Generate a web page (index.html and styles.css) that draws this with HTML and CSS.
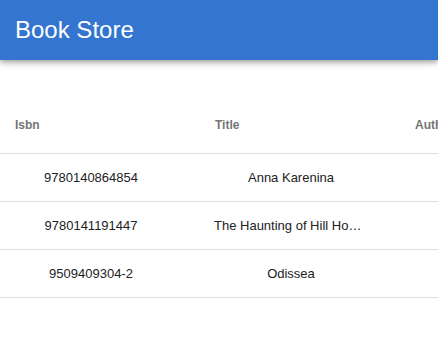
FILE: index.html
```html
<!DOCTYPE html>
<html lang="en">
<head>
  <meta charset="UTF-8">
  <meta name="viewport" content="width=device-width, initial-scale=1">
  <title>Book Store</title>
  <link rel="stylesheet" href="styles.css">
</head>
<body>

  <header class="app-bar">
    <h1>Book Store</h1>
  </header>

  <div class="grid">
    <div class="row head">
      <div class="cell">Isbn</div>
      <div class="cell">Title</div>
      <div class="cell">Author</div>
      <div class="cell">Price</div>
    </div>
    <div class="row">
      <div class="cell">9780140864854</div>
      <div class="cell">Anna Karenina</div>
      <div class="cell">Leo Tolstoy</div>
      <div class="cell">12.50</div>
    </div>
    <div class="row">
      <div class="cell">9780141191447</div>
      <div class="cell">The Haunting of Hill House</div>
      <div class="cell">Shirley Jackson</div>
      <div class="cell">9.99</div>
    </div>
    <div class="row">
      <div class="cell">9509409304-2</div>
      <div class="cell">Odissea</div>
      <div class="cell">Omero</div>
      <div class="cell">15.00</div>
    </div>
  </div>

</body>
</html>
```

FILE: styles.css
```css
body {
  font-family: "Liberation Sans", Arial, sans-serif;
  margin: 0;
  background-color: white;
  overflow: hidden;
}

.app-bar {
  height: 60px;
  display: flex;
  align-items: center;
  padding: 0 15px;
  background-color: #3375cf;
  box-shadow: 0 2px 4px -1px rgba(0,0,0,0.2), 0 4px 5px 0 rgba(0,0,0,0.14), 0 1px 10px 0 rgba(0,0,0,0.12);
}

.app-bar h1 {
  margin: 0;
  font-size: 24px;
  font-weight: normal;
  color: white;
}

.grid {
  margin-top: 37px;
  overflow: hidden;
}

.row {
  display: flex;
  height: 48px;
  border-bottom: 1px solid #e0e0e0;
  box-sizing: border-box;
  width: max-content;
}

.cell {
  width: 200px;
  flex: none;
  box-sizing: border-box;
  padding: 0 32px 0 14px;
  display: flex;
  align-items: center;
  font-size: 13px;
  color: #222;
  white-space: nowrap;
  overflow: hidden;
  text-overflow: ellipsis;
}

.row:not(.head) .cell {
  display: block;
  line-height: 47px;
  text-align: center;
}

.head {
  height: 57px;
}

.head .cell {
  padding-left: 15px;
  font-size: 12px;
  font-weight: bold;
  color: #757575;
}
```
